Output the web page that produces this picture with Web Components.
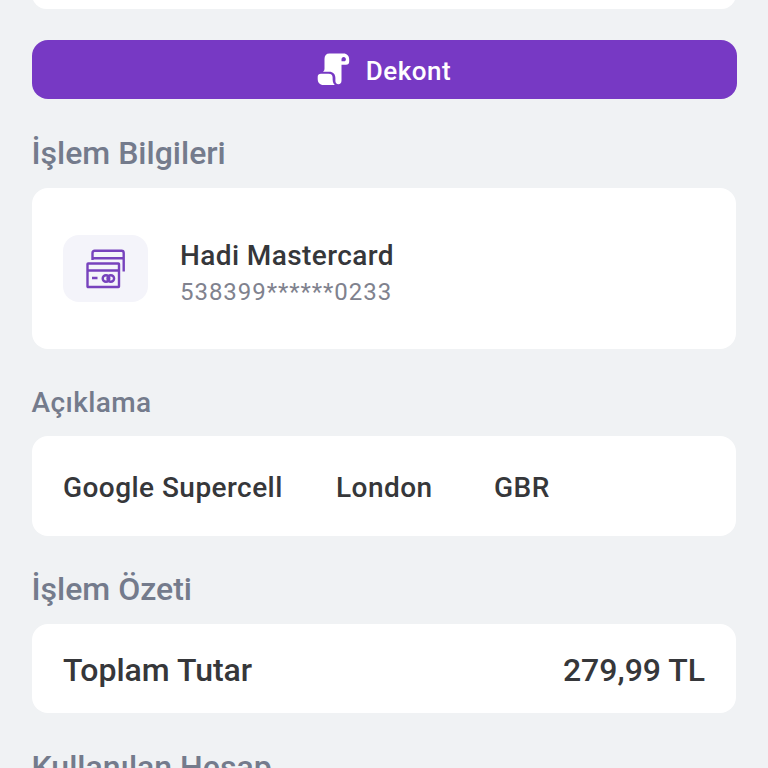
<!DOCTYPE html>
<html lang="tr">
<head>
<meta charset="utf-8">
<title>İşlem Detayı</title>
<style>
  html, body { margin: 0; height: 100%; }
  body { background: #f0f2f4; overflow: hidden; }
</style>
</head>
<body>
<transaction-page>
  <info-card class="previous"></info-card>
  <receipt-button>Dekont</receipt-button>

  <section-title class="info">İşlem Bilgileri</section-title>
  <info-card class="card-row">
    <card-account>
      <span slot="name">Hadi Mastercard</span>
      <span slot="number">538399******0233</span>
    </card-account>
  </info-card>

  <section-title class="description" size="small">Açıklama</section-title>
  <info-card class="description-row">
    <merchant-line>
      <span>Google Supercell</span>
      <span>London</span>
      <span>GBR</span>
    </merchant-line>
  </info-card>

  <section-title class="summary">İşlem Özeti</section-title>
  <info-card class="total-row">
    <total-line>
      <span slot="label">Toplam Tutar</span>
      <span slot="amount">279,99 TL</span>
    </total-line>
  </info-card>

  <section-title class="account">Kullanılan Hesap</section-title>
</transaction-page>

<script>
class TransactionPage extends HTMLElement {
  constructor() {
    super();
    this.attachShadow({ mode: 'open' }).innerHTML = `
      <style>
        :host {
          display: flex;
          flex-direction: column;
          height: 768px;
          width: 768px;
          box-sizing: border-box;
          padding: 0 32px;
          overflow: hidden;
          font-family: Roboto, "Liberation Sans", sans-serif;
          font-weight: 500;
          color: #36373a;
          background: #f0f2f4;
        }
        ::slotted(*) { flex: none; }
        ::slotted(.previous) { height: 29px; margin-top: -20px; }
        ::slotted(receipt-button) { margin: 31px -0.5px 0; }
        ::slotted(section-title) { margin-left: -0.5px; }
        ::slotted(.info) { margin-top: 34px; }
        ::slotted(.card-row) { height: 161px; margin-top: 15px; }
        ::slotted(.description) { margin-top: 34px; }
        ::slotted(.description-row) { height: 100px; margin-top: 13px; }
        ::slotted(.summary) { margin-top: 33px; }
        ::slotted(.total-row) { height: 89px; margin-top: 15px; }
        ::slotted(.account) { margin-top: 34px; }
      </style>
      <slot></slot>
    `;
  }
}

class InfoCard extends HTMLElement {
  constructor() {
    super();
    this.attachShadow({ mode: 'open' }).innerHTML = `
      <style>
        :host {
          display: flex;
          align-items: center;
          box-sizing: border-box;
          padding: 0 31px;
          border-radius: 16px;
          background: #fff;
        }
        ::slotted(*) { flex: 1; }
      </style>
      <slot></slot>
    `;
  }
}

class SectionTitle extends HTMLElement {
  constructor() {
    super();
    this.attachShadow({ mode: 'open' }).innerHTML = `
      <style>
        :host {
          display: block;
          font-size: 32px;
          line-height: 40px;
          color: #747b8c;
          white-space: nowrap;
        }
        :host([size="small"]) { font-size: 28px; letter-spacing: 0.4px; }
      </style>
      <slot></slot>
    `;
  }
}

class ReceiptButton extends HTMLElement {
  constructor() {
    super();
    this.attachShadow({ mode: 'open' }).innerHTML = `
      <style>
        :host { display: block; }
        button {
          display: flex;
          align-items: center;
          justify-content: center;
          gap: 16px;
          width: 100%;
          height: 59px;
          padding: 0;
          border: 0;
          border-radius: 16px;
          background: #7739c4;
          color: #fff;
          font: 500 26px/32px Roboto, "Liberation Sans", sans-serif;
          letter-spacing: 0.5px;
        }
        span { padding-top: 3px; }
        svg { display: block; }
      </style>
      <button type="button">
        <svg width="33" height="33" viewBox="0 0 33 33" fill="#fff">
          <path fill-rule="evenodd" d="M12.500 .5H26.500C30 .5 32.200 3 32.200 6.500V8.500C32.200 10.600 31 11.700 29 11.700H24.500V27.500C24.500 30 23.200 31.200 21.400 31.200C19.500 31.200 18.400 30 18.400 28V25C18.400 21 16 18.700 12.300 18.700H6C7.100 18 7.500 17 7.500 15.500V6C7.500 2.500 9.200.5 12.500 .5ZM24.500 8.300H27C28.300 8.300 28.900 7.300 28.900 6.200C28.900 4.900 28 3.900 26.700 3.900C25.400 3.900 24.500 4.900 24.500 6.200Z"/>
          <path d="M4 20.700H11.500C14.500 20.700 15.600 22 15.600 24.500C15.600 27.800 15.700 30 17.800 32H6.500C2.800 32 .7 29.500 .7 26V23.700C.7 21.700 2 20.700 4 20.700Z"/>
        </svg>
        <span><slot></slot></span>
      </button>
    `;
  }
}

class CardAccount extends HTMLElement {
  constructor() {
    super();
    this.attachShadow({ mode: 'open' }).innerHTML = `
      <style>
        :host { display: flex; align-items: center; gap: 32px; }
        .icon {
          display: flex;
          align-items: center;
          justify-content: center;
          width: 85px;
          height: 67px;
          border-radius: 16px;
          background: #f4f4fa;
        }
        .text { display: flex; flex-direction: column; padding-top: 10px; white-space: nowrap; }
        .name { font-size: 28px; line-height: 37px; letter-spacing: 0.4px; }
        .number { font-size: 24px; line-height: 37px; letter-spacing: 0.95px; font-weight: 400; color: #80828e; }
      </style>
      <div class="icon">
        <svg width="40" height="40" viewBox="0 0 40 40" fill="none" stroke="#7742bd" stroke-width="2.400">
          <path d="M6.500 11V4Q6.500 1.800 8.700 1.800H35.500Q37.700 1.800 37.700 4V22.500M6.500 9.200H37.700"/>
          <rect x="1.500" y="14.500" width="31.500" height="23.500" rx=".6"/>
          <path d="M1.500 21.500H33M6 29H11.500"/>
          <circle cx="20" cy="29.500" r="3.300"/>
          <circle cx="24.800" cy="29.500" r="3.300"/>
        </svg>
      </div>
      <div class="text">
        <div class="name"><slot name="name"></slot></div>
        <div class="number"><slot name="number"></slot></div>
      </div>
    `;
  }
}

class MerchantLine extends HTMLElement {
  constructor() {
    super();
    this.attachShadow({ mode: 'open' }).innerHTML = `
      <style>
        :host {
          display: grid;
          grid-template-columns: 273px 158px auto;
          padding-top: 3px;
          font-size: 28px;
          line-height: 36px;
          letter-spacing: 0.45px;
          white-space: nowrap;
        }
      </style>
      <slot></slot>
    `;
  }
}

class TotalLine extends HTMLElement {
  constructor() {
    super();
    this.attachShadow({ mode: 'open' }).innerHTML = `
      <style>
        :host {
          display: flex;
          justify-content: space-between;
          padding-top: 3px;
          font-size: 32px;
          line-height: 40px;
          white-space: nowrap;
        }
      </style>
      <slot name="label"></slot>
      <slot name="amount"></slot>
    `;
  }
}

customElements.define('transaction-page', TransactionPage);
customElements.define('info-card', InfoCard);
customElements.define('section-title', SectionTitle);
customElements.define('receipt-button', ReceiptButton);
customElements.define('card-account', CardAccount);
customElements.define('merchant-line', MerchantLine);
customElements.define('total-line', TotalLine);
</script>
</body>
</html>
